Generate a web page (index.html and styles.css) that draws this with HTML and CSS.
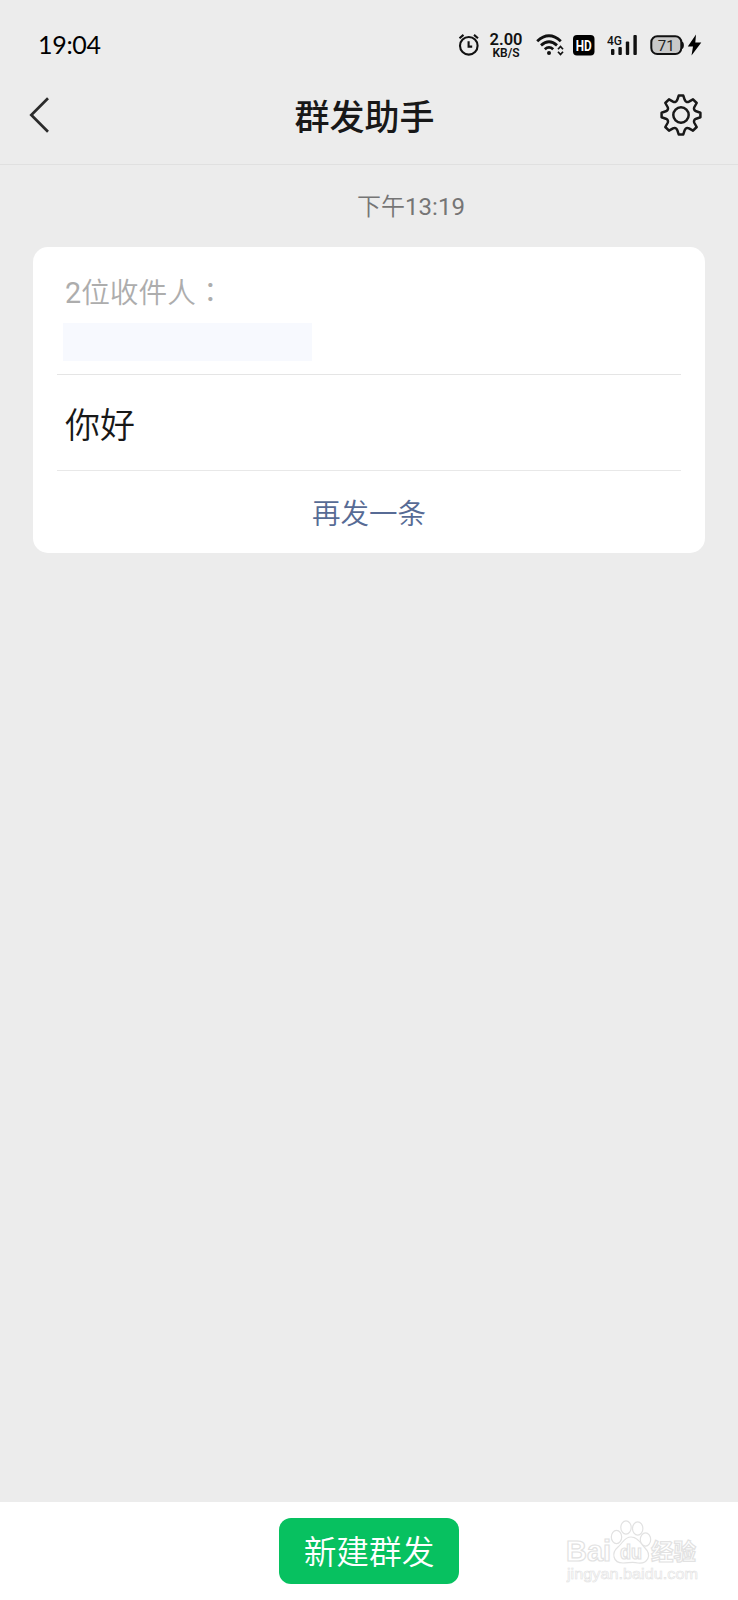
FILE: index.html
```html
<!DOCTYPE html>
<html lang="zh-CN">
<head>
<meta charset="utf-8">
<title>群发助手</title>
<link rel="stylesheet" href="styles.css">
</head>
<body>
<div class="screen">
  <div class="status">
    <span class="clock">19:04</span>
    <div class="indicators">
      <svg class="alarm" width="22" height="24" viewBox="0 0 22 24" fill="none" stroke="#111" stroke-width="2.100"><circle cx="10.800" cy="12.800" r="8.800"/><path d="M10.600 8.200v5.400h3.600M1.500 5.300 5.500 1.900M16 1.900l4 3.400"/></svg>
      <div class="speed"><b>2.00</b><small>KB/S</small></div>
      <svg class="wifi" width="28" height="22" viewBox="0 0 28 22" fill="none" stroke="#111" stroke-width="2.800"><path d="M1.200 7.200Q13-3.800 24.800 7.200M5 11.400q8-7.300 16 0M8.800 15.200q4.200-3.700 8.400 0"/><circle cx="13" cy="19" r="2" fill="#111" stroke="none"/><path d="m22 15.300 2.500-2.800 2.500 2.800M22 17.700l2.500 2.800 2.500-2.800" stroke-width="1.700"/></svg>
      <svg class="hd" width="22" height="21" viewBox="0 0 22 21"><rect width="21.500" height="20.500" rx="4" fill="#000"/><text x="2.800" y="15.700" class="hd-label" textLength="16" lengthAdjust="spacingAndGlyphs">HD</text></svg>
      <svg class="signal" width="31" height="26" viewBox="0 -2 31 26" fill="#111"><rect x="4" y="15" width="3.400" height="6" rx="1"/><rect x="11.400" y="13" width="3.400" height="8" rx="1"/><rect x="18.800" y="7.500" width="3.400" height="13.500" rx="1"/><rect x="26.400" y="1" width="3.400" height="20" rx="1"/><text x="0" y="10.800" class="net" textLength="15" lengthAdjust="spacingAndGlyphs">4G</text></svg>
      <svg class="battery" width="52" height="22" viewBox="0 0 52 22"><rect x="1.300" y="2.300" width="30" height="17.800" rx="6" fill="#c9c9c9" stroke="#111" stroke-width="2"/><path d="M32 7.500c2.500.5 2.500 7 0 7.500z" fill="#111"/><text x="16.300" y="16.600" text-anchor="middle" class="charge">71</text><path d="M46 .5 37.800 12.500h5.200L41.500 21.500 51.300 8.500h-6z" fill="#000"/></svg>
    </div>
  </div>
  <header class="nav">
    <svg width="22" height="38" viewBox="0 0 22 38" fill="none" stroke="#2b2b2b" stroke-width="2.700"><path d="M20 2.300 3.300 19 20 35.700"/></svg>
    <h1>群发助手</h1>
    <svg width="44" height="44" viewBox="-22 -22 44 44" fill="none" stroke="#181818" stroke-width="2.500" stroke-linejoin="round"><circle r="7.700"/><path d="M-2.300-19.400H2.300L3.700-15.200Q5.100-12 8-13.400L12-15.700 15.700-12 13.400-8Q12-5.100 15.200-3.700L19.400-2.300V2.300L15.200 3.700Q12 5.100 13.400 8L15.700 12 12 15.700 8 13.400Q5.100 12 3.700 15.200L2.300 19.400H-2.300L-3.700 15.200Q-5.100 12-8 13.400L-12 15.700-15.700 12-13.400 8Q-12 5.100-15.200 3.700L-19.400 2.300V-2.300L-15.200-3.700Q-12-5.100-13.400-8L-15.700-12-12-15.700-8-13.400Q-5.100-12-3.700-15.200Z"/></svg>
  </header>
  <main>
    <time class="sent-at">下午<span class="num">13:19</span></time>
    <section class="card">
      <div class="recipients"><p><span class="num">2</span>位收件人<span class="colon" lang="zh-TW">：</span></p><div class="names"></div></div>
      <p class="message">你好</p>
      <a class="again">再发一条</a>
    </section>
  </main>
  <footer class="bottom">
    <button class="create">新建群发</button>
    <div class="watermark">
      <svg width="134" height="66" viewBox="0 0 134 66" fill="#fff" stroke="#e2e2e2" stroke-width="1.200">
        <g class="brand"><text x="0" y="42" textLength="45" lengthAdjust="spacingAndGlyphs">Bai</text><text x="85" y="41" class="jy" textLength="45" lengthAdjust="spacingAndGlyphs">经验</text></g>
        <ellipse cx="50.500" cy="18" rx="5.200" ry="6.700"/><ellipse cx="60" cy="8.500" rx="5.200" ry="6.700"/><ellipse cx="71.700" cy="9.500" rx="5.200" ry="6.700"/><ellipse cx="79.500" cy="20.500" rx="5.200" ry="6.700"/>
        <path d="M65 18c-7 0-8 6-13 10-7 6-5 16 5 16 6 0 9-1.500 15 0 10 1 14-8 7-15-4-4-7-11-14-11z"/>
        <text x="54" y="40" class="du" textLength="22" lengthAdjust="spacingAndGlyphs">du</text>
        <text x="1" y="59.500" class="site" textLength="131" lengthAdjust="spacingAndGlyphs">jingyan.baidu.com</text>
      </svg>
    </div>
  </footer>
</div>
</body>
</html>
```
FILE: styles.css
```css
* { box-sizing: border-box; }
body, h1, p { margin: 0; }
body { font-family: Roboto, "Noto Sans CJK SC", sans-serif; color: #181818; }
.num { font-weight: 400; }
.screen { height: 1600px; display: flex; flex-direction: column; background: #ececec; }
.status { height: 76px; padding: 14px 36px 0 38px; display: flex; align-items: center; justify-content: space-between; }
.clock { padding-bottom: 2px; font: 25px/30px Lato, sans-serif; letter-spacing: -.3px; color: #000; }
.indicators { display: flex; align-items: center; }
.speed { width: 34px; margin-left: 9px; padding-top: 1px; display: flex; flex-direction: column; align-items: center; color: #111; }
.speed b { height: 14px; font-size: 16.500px; line-height: 14px; font-weight: 600; }
.speed small { height: 12px; font-size: 12px; line-height: 12px; font-weight: 600; }
.wifi { margin-left: 13px; }
.hd { margin-left: 9px; }
.hd-label { font: 700 14.500px Roboto, sans-serif; fill: #fff; }
.signal { margin-left: 12px; }
.net { font: 500 13px Roboto, sans-serif; }
.battery { margin-left: 12px; }
.charge { font: 15px Roboto, sans-serif; fill: #222; }
.nav { height: 89px; padding: 0 35px 10px 28px; border-bottom: 1px solid #e0e0e0; display: flex; align-items: center; justify-content: space-between; }
.nav h1 { font-size: 35px; line-height: 44px; font-weight: 500; padding: 8px 0 0 20px; }
main { flex: 1; padding: 0 33px 0 33px; display: flex; flex-direction: column; }
.sent-at { height: 82px; padding: 24px 0 0 84px; text-align: center; font-size: 24px; line-height: 36px; color: #757575; font-weight: 350; }
.card { height: 306px; padding: 0 24px; border-radius: 15px; background: #fff; display: flex; flex-direction: column; font-weight: 350; }
.recipients { height: 128px; padding: 24px 6px 0; border-bottom: 1px solid #e5e5e5; font-size: 28.700px; line-height: 40px; color: #adadad; }
.recipients p { height: 40px; padding-left: 2px; }
.colon { font-family: "Noto Sans CJK TC", sans-serif; }
.names { width: 249px; height: 38px; margin-top: 12px; background: #f7f9fe; }
.message { height: 96px; padding: 28px 8px 0; border-bottom: 1px solid #e8e8e8; font-size: 35px; line-height: 48px; }
.again { padding-top: 24px; text-align: center; font-size: 28.500px; line-height: 40px; color: #576b95; }
.bottom { position: relative; height: 98px; padding-top: 16px; display: flex; justify-content: center; align-items: flex-start; background: #fff; }
.create { width: 180px; height: 66px; padding: 4px 0 0; border: 0; border-radius: 12px; background: #07c160; color: #fff; font: 350 32.700px/62px Roboto, "Noto Sans CJK SC", sans-serif; }
.watermark { position: absolute; right: 38px; top: 17px; }
.brand { font: 700 30px "Liberation Sans", sans-serif; }
.jy { font: 700 23px "Noto Sans CJK SC", sans-serif; }
.du { font: 700 20px "Liberation Sans", sans-serif; }
.site { font: 15.500px "Liberation Sans", sans-serif; stroke-width: .6px; }
```
